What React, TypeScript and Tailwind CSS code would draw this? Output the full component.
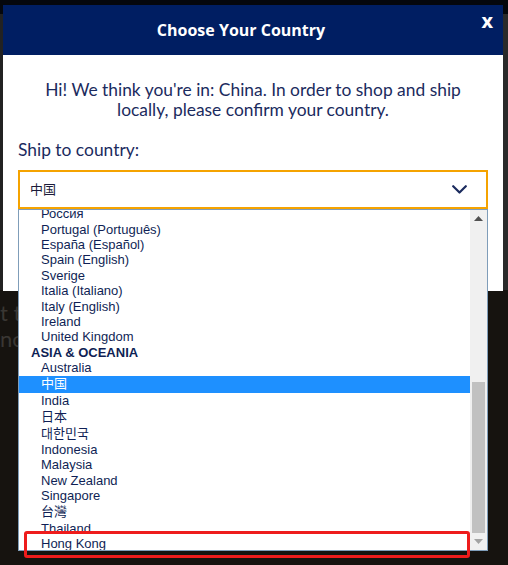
import React from "react";

type Row = { label: string; kind?: "group" | "selected"; cjk?: boolean };

const rows: Row[] = [
  { label: "Россия" },
  { label: "Portugal (Português)" },
  { label: "España (Español)" },
  { label: "Spain (English)" },
  { label: "Sverige" },
  { label: "Italia (Italiano)" },
  { label: "Italy (English)" },
  { label: "Ireland" },
  { label: "United Kingdom" },
  { label: "ASIA & OCEANIA", kind: "group" },
  { label: "Australia" },
  { label: "中国", kind: "selected", cjk: true },
  { label: "India" },
  { label: "日本", cjk: true },
  { label: "대한민국", cjk: true },
  { label: "Indonesia" },
  { label: "Malaysia" },
  { label: "New Zealand" },
  { label: "Singapore" },
  { label: "台灣", cjk: true },
  { label: "Thailand" },
  { label: "Hong Kong" },
];

const sans = "font-['Lato','Noto_Sans_CJK_SC',sans-serif]";
const listFont = "font-['Liberation_Sans','Noto_Sans_CJK_SC','Noto_Sans_CJK_KR',sans-serif]";

export default function App() {
  return (
    <div className="relative h-[565px] w-[508px] overflow-hidden bg-[#16130f]">
      {/* page behind the modal */}
      <div className="h-[14px] bg-[#05070c]" />
      <div className="flex h-[551px]">
        <div className="h-[276px] w-[3px] bg-[#222222]" />
        <div className="flex-1" />
        <div className="h-[276px] w-[5px] bg-[#2a2a2a]" />
      </div>
      <div className="absolute left-0 top-[300px] text-[22px] leading-[26px] text-[#3a3733] font-['Lato',sans-serif]">
        <div>t t</div>
        <div>nc</div>
      </div>

      {/* modal */}
      <div className={`absolute left-[3px] top-[5px] w-[500px] bg-white ${sans}`}>
        <div className="relative flex h-[50px] items-center justify-center bg-[#001e62] pr-[24px]">
          <span className="font-['Open_Sans',sans-serif] text-[16px] font-bold text-white">Choose Your Country</span>
          <span className="absolute right-[10px] top-[5px] font-['Open_Sans',sans-serif] text-[16px] font-extrabold text-white">X</span>
        </div>
        <div className="px-[15px] pb-[82px]">
          <p className="pt-[25px] text-center text-[17.4px] leading-[20px] text-[#1b2b5e]">
            Hi! We think you're in: China. In order to shop and ship
            <br />
            locally, please confirm your country.
          </p>
          <div className="mt-[20px] text-[17.4px] leading-[20px] text-[#1b2b5e]">Ship to country:</div>
          <div className="mt-[10px] flex h-[39px] items-center justify-between border-2 border-[#f5a300] pl-[10px] pr-[19px]">
            <span className={`${listFont} text-[13px] text-[#1b1b3a]`}>中国</span>
            <svg width="15" height="9" viewBox="0 0 15 9" fill="none">
              <path d="M1.2 1.2 L7.5 7.5 L13.8 1.2" stroke="#1b2b5e" strokeWidth="2.2" strokeLinecap="round" strokeLinejoin="round" />
            </svg>
          </div>
        </div>
      </div>

      {/* open select list */}
      <div className={`absolute left-[18px] top-[209px] flex h-[342px] w-[470px] border border-[#7f9db9] bg-white ${listFont}`}>
        <div className="flex-1 overflow-hidden">
          <div className="-mt-[3.7px]">
            {rows.map((r) => (
              <div
                key={r.label}
                className={`flex items-center text-[13px] ${r.cjk ? "h-[17px]" : "h-[15.4px]"} ${
                  r.kind === "group"
                    ? "pl-[12px] font-bold text-[#0f1f55]"
                    : r.kind === "selected"
                    ? "bg-[#1e90ff] pl-[22px] text-white"
                    : "pl-[22px] text-[#0f1f55]"
                }`}
              >
                {r.label}
              </div>
            ))}
          </div>
        </div>
        <div className="flex w-[17px] flex-col items-center bg-[#f0f0f0]">
          <div className="flex h-[17px] items-center justify-center">
            <svg width="9" height="5" viewBox="0 0 9 5">
              <path d="M0 5 L4.5 0 L9 5 Z" fill="#505050" />
            </svg>
          </div>
          <div className="mt-[155px] h-[151px] w-[13px] bg-[#c1c1c1]" />
          <div className="flex h-[17px] items-center justify-center">
            <svg width="9" height="5" viewBox="0 0 9 5">
              <path d="M0 0 L9 0 L4.5 5 Z" fill="#a3a3a3" />
            </svg>
          </div>
        </div>
      </div>

      {/* annotation */}
      <div className="absolute left-[24px] top-[531px] h-[27px] w-[446px] rounded-[3px] border-[3px] border-[#ee1c1c]" />
    </div>
  );
}
